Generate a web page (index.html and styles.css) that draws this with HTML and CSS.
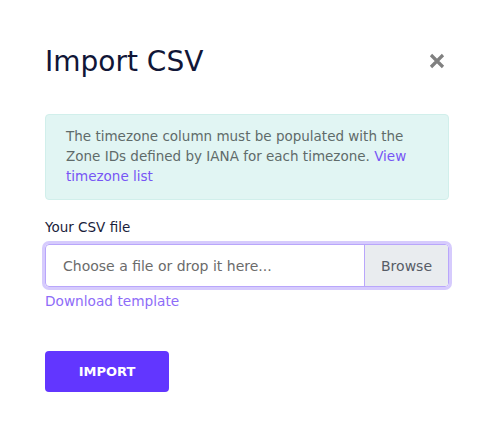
FILE: index.html
```html
<!DOCTYPE html>
<html lang="en">
  <head>
    <meta charset="UTF-8" />
    <meta name="viewport" content="width=device-width, initial-scale=1.0" />
    <title>Import CSV</title>
    <link rel="stylesheet" href="styles.css">
  </head>
  <body>
    <div class="modal">
      <div class="modal-header">
        <h1 class="modal-title">Import CSV</h1>
        <button class="close-btn" aria-label="Close">
          <svg width="16" height="16" viewBox="0 0 16 16">
            <path d="M2 2 L14 14 M14 2 L2 14" stroke="#808080" stroke-width="3.2" stroke-linecap="butt" />
          </svg>
        </button>
      </div>

      <div class="alert">
        The timezone column must be populated with the Zone IDs defined by IANA for each timezone.
        <a href="#">View timezone list</a>
      </div>

      <label class="field-label">Your CSV file</label>
      <div class="file-input">
        <span class="file-placeholder">Choose a file or drop it here...</span>
        <span class="file-browse">Browse</span>
      </div>
      <a href="#" class="template-link">Download template</a>

      <button class="import-btn">IMPORT</button>
    </div>
  </body>
</html>
```

FILE: styles.css
```css
body {
  font-family: "DejaVu Sans", "Open Sans", Arial, sans-serif;
  margin: 0;
  padding: 0;
  background-color: #fff;
}

.modal {
  padding: 40px 45px 0 45px;
  width: 404px;
}

.modal-header {
  display: flex;
  align-items: center;
  justify-content: space-between;
  height: 42px;
  margin-bottom: 32px;
}

.modal-title {
  margin: 0;
  font-size: 28px;
  font-weight: 400;
  color: #111637;
}

.close-btn {
  background: none;
  border: none;
  padding: 0;
  margin-right: 4px;
  cursor: pointer;
  display: flex;
}

.alert {
  background-color: #e1f5f3;
  border: 1px solid #d1efeb;
  border-radius: 4px;
  padding: 11px 20px 13px 20px;
  font-size: 13.5px;
  line-height: 20px;
  color: #5f6b6a;
}

.alert a {
  color: #7755f5;
  text-decoration: none;
}

.field-label {
  display: block;
  margin-top: 19px;
  font-size: 13.5px;
  color: #1a1d3a;
}

.file-input {
  display: flex;
  margin-top: 9px;
  height: 41px;
  border: 1px solid #b9a6fb;
  border-radius: 4px;
  box-shadow: 0 0 0 3px #d6cbfd;
  overflow: hidden;
  font-size: 14px;
}

.file-placeholder {
  flex: 1;
  display: flex;
  align-items: center;
  padding-left: 17px;
  color: #6b6b6b;
}

.file-browse {
  display: flex;
  align-items: center;
  padding: 0 16px;
  background-color: #e9ecef;
  border-left: 1px solid #b9a6fb;
  color: #575c66;
}

.template-link {
  display: block;
  margin-top: 6px;
  font-size: 13.7px;
  color: #8e6cf8;
  text-decoration: none;
}

.import-btn {
  margin-top: 42px;
  width: 124px;
  height: 41px;
  background-color: #6236ff;
  color: #fff;
  border: none;
  border-radius: 4px;
  font-family: inherit;
  font-size: 13px;
  font-weight: 700;
  cursor: pointer;
}
```
